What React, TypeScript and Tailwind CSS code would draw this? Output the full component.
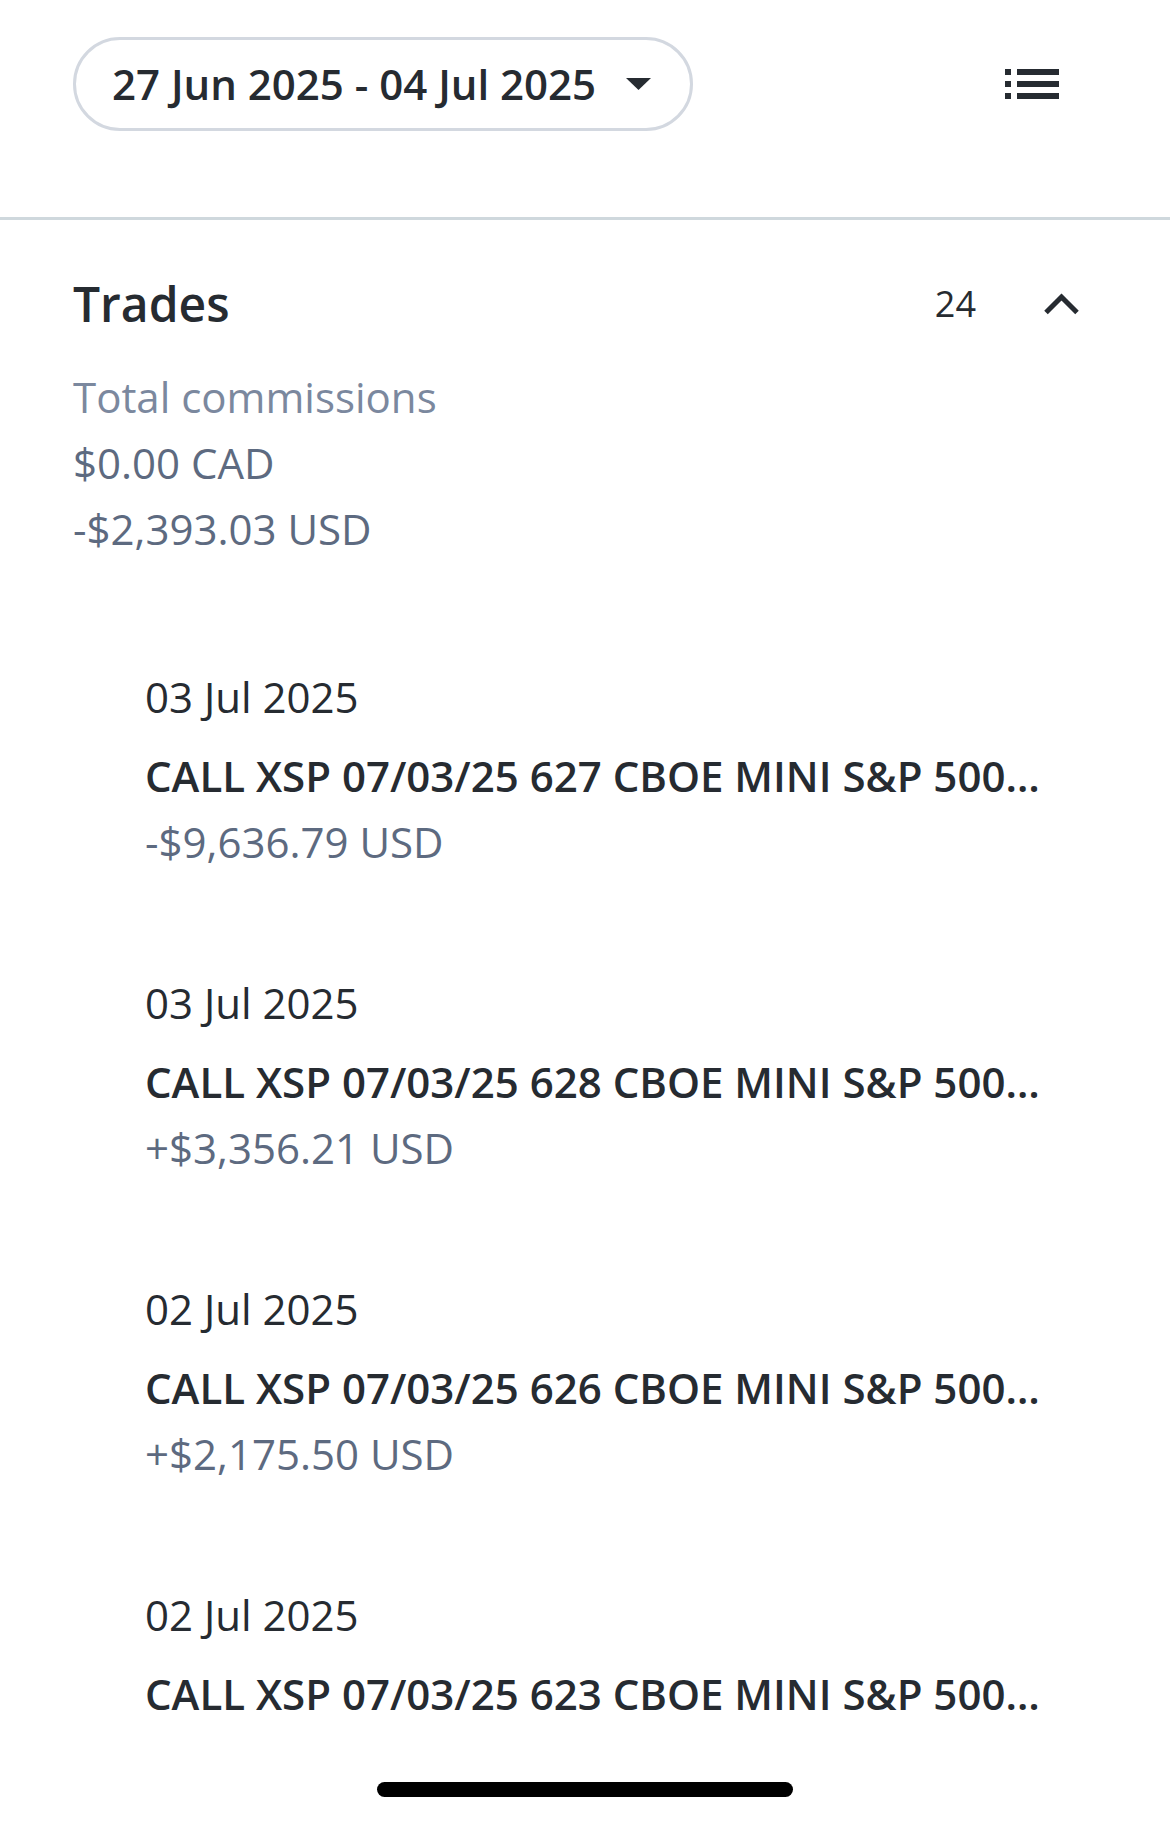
import React from 'react'

const trades = [
  { date: '03 Jul 2025', title: 'CALL XSP 07/03/25 627 CBOE MINI S&P 500…', amount: '-$9,636.79 USD' },
  { date: '03 Jul 2025', title: 'CALL XSP 07/03/25 628 CBOE MINI S&P 500…', amount: '+$3,356.21 USD' },
  { date: '02 Jul 2025', title: 'CALL XSP 07/03/25 626 CBOE MINI S&P 500…', amount: '+$2,175.50 USD' },
  { date: '02 Jul 2025', title: 'CALL XSP 07/03/25 623 CBOE MINI S&P 500…', amount: '+$1,482.36 USD' },
]

function ListIcon() {
  return (
    <svg width="54" height="30" viewBox="0 0 54 30" fill="#262b31">
      <rect x="0" y="0" width="6" height="6" />
      <rect x="0" y="12" width="6" height="6" />
      <rect x="0" y="24" width="6" height="6" />
      <rect x="12" y="0" width="42" height="6" />
      <rect x="12" y="12" width="42" height="6" />
      <rect x="12" y="24" width="42" height="6" />
    </svg>
  )
}

export default function App() {
  return (
    <div
      className="relative h-[1821px] w-full overflow-hidden bg-white text-[#262b31]"
      style={{ fontFamily: '"Open Sans", "Noto Sans", sans-serif' }}
    >
      {/* header */}
      <div className="flex items-center justify-between pl-[73px] pr-[111px] pt-[37px] pb-[86px]">
        <button className="flex h-[94px] w-[620px] items-center rounded-full border-[3px] border-[#d3d8e0] pl-[36px]">
          <span className="text-[42px] font-semibold leading-none">27 Jun 2025 - 04 Jul 2025</span>
          <svg className="ml-[30px]" width="25" height="12" viewBox="0 0 25 12" fill="#262b31">
            <polygon points="0,0 25,0 12.5,12" />
          </svg>
        </button>
        <ListIcon />
      </div>
      <div className="h-[3px] w-full bg-[#cfd8dd]" />

      {/* trades section */}
      <div className="pl-[73px] pr-[91px] pt-[60px]">
        <div className="flex h-[48px] items-center justify-between">
          <h2 className="text-[48px] font-semibold leading-[48px]">Trades</h2>
          <div className="flex items-center gap-[68px]">
            <span className="text-[36px] leading-[36px]">24</span>
            <svg width="35" height="22" viewBox="0 0 35 22" fill="none" stroke="#262b31" strokeWidth="5">
              <polyline points="2,19.5 17.5,4 33,19.5" />
            </svg>
          </div>
        </div>

        <div className="mt-[36px] text-[42px] leading-[66px]">
          <p className="text-[#7b889e]">Total commissions</p>
          <p className="text-[#5d6a80]">$0.00 CAD</p>
          <p className="text-[#5d6a80]">-$2,393.03 USD</p>
        </div>

        <ul className="mt-[102px] flex flex-col gap-[95px] pl-[72px]">
          {trades.map((t, i) => (
            <li key={i}>
              <p className="mb-[13px] text-[42px] leading-[66px]">{t.date}</p>
              <p className="whitespace-nowrap text-[42px] font-semibold leading-[66px]">{t.title}</p>
              <p className="text-[42px] leading-[66px] text-[#5d6a80]">{t.amount}</p>
            </li>
          ))}
        </ul>
      </div>

      {/* home indicator */}
      <div className="absolute bottom-0 left-0 right-0 flex h-[90px] justify-center bg-white pt-[51px]">
        <div className="h-[15px] w-[416px] rounded-full bg-black" />
      </div>
    </div>
  )
}
